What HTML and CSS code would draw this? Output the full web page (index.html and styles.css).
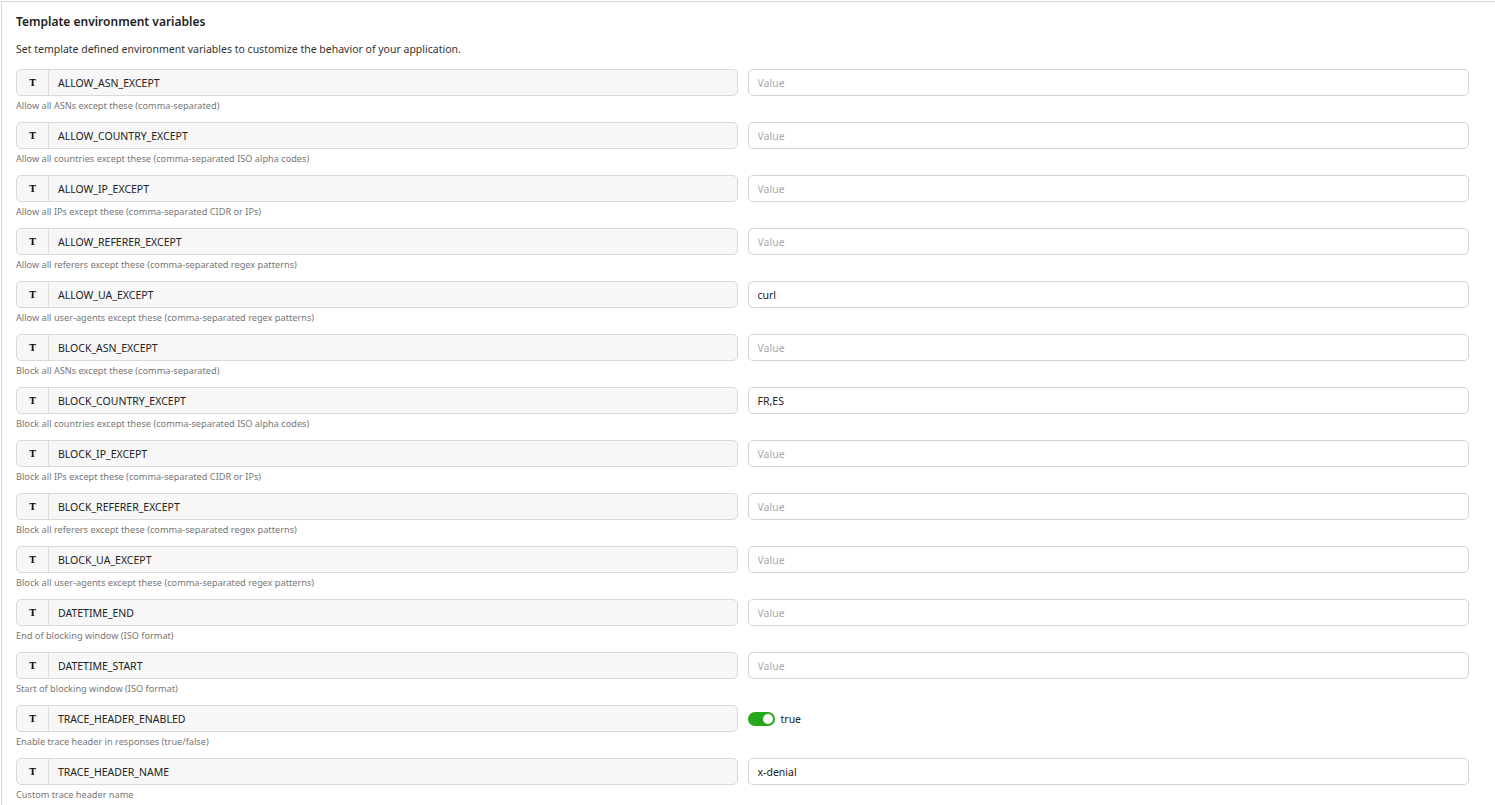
FILE: index.html
```html
<html>

<head>
    <link rel="stylesheet" href="styles.css">
</head>

<body>

    <div class="panel">
        <h2 class="panel-title">Template environment variables</h2>
        <p class="panel-desc">Set template defined environment variables to customize the behavior of your application.</p>

        <div class="env-list">
            <div class="env-row">
                <div class="env-name"><span class="type-badge">T</span><span class="name-text">ALLOW_ASN_EXCEPT</span></div>
                <input type="text" class="env-value" placeholder="Value">
                <div class="env-hint">Allow all ASNs except these (comma-separated)</div>
            </div>
            <div class="env-row">
                <div class="env-name"><span class="type-badge">T</span><span class="name-text">ALLOW_COUNTRY_EXCEPT</span></div>
                <input type="text" class="env-value" placeholder="Value">
                <div class="env-hint">Allow all countries except these (comma-separated ISO alpha codes)</div>
            </div>
            <div class="env-row">
                <div class="env-name"><span class="type-badge">T</span><span class="name-text">ALLOW_IP_EXCEPT</span></div>
                <input type="text" class="env-value" placeholder="Value">
                <div class="env-hint">Allow all IPs except these (comma-separated CIDR or IPs)</div>
            </div>
            <div class="env-row">
                <div class="env-name"><span class="type-badge">T</span><span class="name-text">ALLOW_REFERER_EXCEPT</span></div>
                <input type="text" class="env-value" placeholder="Value">
                <div class="env-hint">Allow all referers except these (comma-separated regex patterns)</div>
            </div>
            <div class="env-row">
                <div class="env-name"><span class="type-badge">T</span><span class="name-text">ALLOW_UA_EXCEPT</span></div>
                <input type="text" class="env-value" placeholder="Value" value="curl">
                <div class="env-hint">Allow all user-agents except these (comma-separated regex patterns)</div>
            </div>
            <div class="env-row">
                <div class="env-name"><span class="type-badge">T</span><span class="name-text">BLOCK_ASN_EXCEPT</span></div>
                <input type="text" class="env-value" placeholder="Value">
                <div class="env-hint">Block all ASNs except these (comma-separated)</div>
            </div>
            <div class="env-row">
                <div class="env-name"><span class="type-badge">T</span><span class="name-text">BLOCK_COUNTRY_EXCEPT</span></div>
                <input type="text" class="env-value" placeholder="Value" value="FR,ES">
                <div class="env-hint">Block all countries except these (comma-separated ISO alpha codes)</div>
            </div>
            <div class="env-row">
                <div class="env-name"><span class="type-badge">T</span><span class="name-text">BLOCK_IP_EXCEPT</span></div>
                <input type="text" class="env-value" placeholder="Value">
                <div class="env-hint">Block all IPs except these (comma-separated CIDR or IPs)</div>
            </div>
            <div class="env-row">
                <div class="env-name"><span class="type-badge">T</span><span class="name-text">BLOCK_REFERER_EXCEPT</span></div>
                <input type="text" class="env-value" placeholder="Value">
                <div class="env-hint">Block all referers except these (comma-separated regex patterns)</div>
            </div>
            <div class="env-row">
                <div class="env-name"><span class="type-badge">T</span><span class="name-text">BLOCK_UA_EXCEPT</span></div>
                <input type="text" class="env-value" placeholder="Value">
                <div class="env-hint">Block all user-agents except these (comma-separated regex patterns)</div>
            </div>
            <div class="env-row">
                <div class="env-name"><span class="type-badge">T</span><span class="name-text">DATETIME_END</span></div>
                <input type="text" class="env-value" placeholder="Value">
                <div class="env-hint">End of blocking window (ISO format)</div>
            </div>
            <div class="env-row">
                <div class="env-name"><span class="type-badge">T</span><span class="name-text">DATETIME_START</span></div>
                <input type="text" class="env-value" placeholder="Value">
                <div class="env-hint">Start of blocking window (ISO format)</div>
            </div>
            <div class="env-row">
                <div class="env-name"><span class="type-badge">T</span><span class="name-text">TRACE_HEADER_ENABLED</span></div>
                <label class="switch-field">
                    <span class="switch on"><span class="knob"></span></span>
                    <span class="switch-label">true</span>
                </label>
                <div class="env-hint">Enable trace header in responses (true/false)</div>
            </div>
            <div class="env-row">
                <div class="env-name"><span class="type-badge">T</span><span class="name-text">TRACE_HEADER_NAME</span></div>
                <input type="text" class="env-value" placeholder="Value" value="x-denial">
                <div class="env-hint">Custom trace header name</div>
            </div>
        </div>
    </div>

</body>

</html>
```

FILE: styles.css
```css
body {
    font-family: "Noto Sans", "Open Sans", sans-serif;
    margin: 0;
    background-color: #fff;
    color: #222;
    overflow: hidden;
}

.panel {
    margin: 1px 0 0 1px;
    border-top: 1px solid #d6d6d6;
    border-left: 1px solid #d6d6d6;
    padding: 0 26px 0 14px;
}

.panel-title {
    font-size: 12px;
    font-weight: 600;
    line-height: 18px;
    margin: 11px 0 0 0;
    color: #1c1c1c;
}

.panel-desc {
    font-size: 10.5px;
    line-height: 16px;
    margin: 10px 0 0 0;
    color: #333;
}

.env-list {
    margin-top: 12px;
}

.env-row {
    display: grid;
    grid-template-columns: 1fr 1fr;
    align-content: start;
    column-gap: 10px;
    height: 53px;
}

.env-name {
    display: flex;
    align-items: center;
    height: 27px;
    box-sizing: border-box;
    border: 1px solid #d9d9d9;
    border-radius: 5px;
    background-color: #f7f7f7;
}

.type-badge {
    width: 31px;
    height: 100%;
    display: flex;
    align-items: center;
    justify-content: center;
    border-right: 1px solid #dcdcdc;
    font-family: "DejaVu Serif", "Liberation Serif", serif;
    font-weight: bold;
    font-size: 9px;
    color: #111;
}

.name-text {
    padding-left: 9px;
    font-size: 10.5px;
    color: #222;
}

.env-value {
    height: 27px;
    box-sizing: border-box;
    border: 1px solid #d4d4d4;
    border-radius: 5px;
    padding: 0 9px;
    font-family: inherit;
    font-size: 10.5px;
    color: #222;
    background-color: #fff;
    outline: none;
}

.env-value::placeholder {
    color: #aaa;
}

.env-hint {
    grid-column: 1;
    font-size: 9.2px;
    line-height: 12px;
    margin-top: 4px;
    color: #777;
}

.switch-field {
    display: flex;
    align-items: center;
    height: 27px;
    gap: 6px;
}

.switch {
    position: relative;
    width: 27px;
    height: 14px;
    border-radius: 7px;
    background-color: #ccc;
}

.switch.on {
    background-color: #27a81a;
}

.switch .knob {
    position: absolute;
    top: 2px;
    left: 2px;
    width: 10px;
    height: 10px;
    border-radius: 50%;
    background-color: #fff;
}

.switch.on .knob {
    left: 15px;
}

.switch-label {
    font-size: 10.5px;
    color: #222;
}
```
